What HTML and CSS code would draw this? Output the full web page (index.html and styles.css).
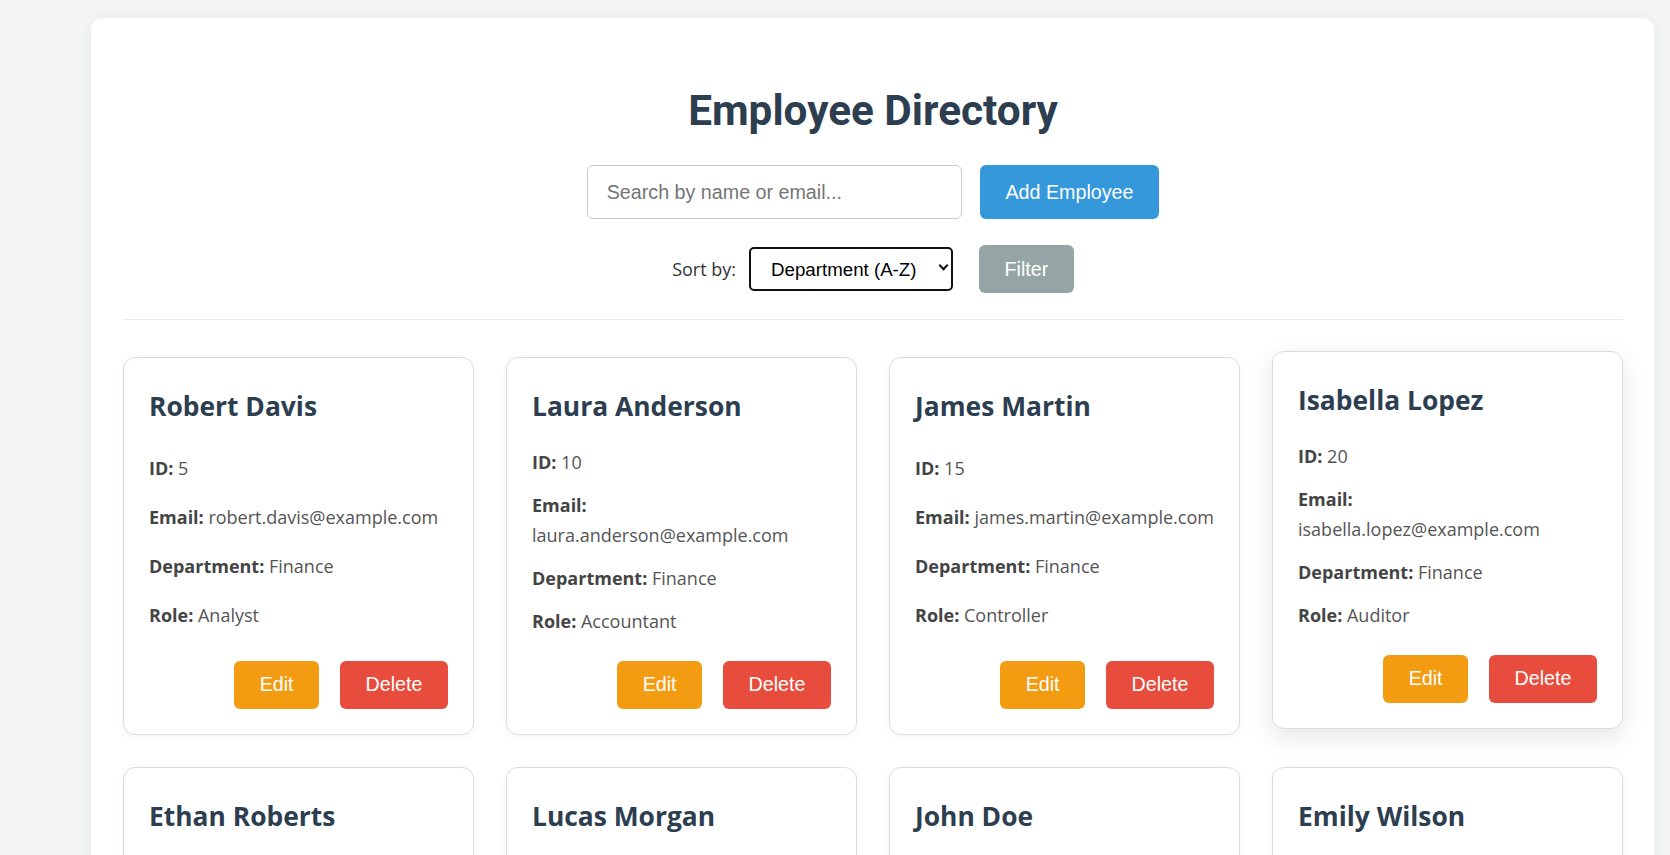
FILE: index.html
```html
<!DOCTYPE html>
<html lang="en">
<head>
<meta charset="utf-8">
<title>Employee Directory</title>
<link rel="stylesheet" href="styles.css">
</head>
<body>
<main class="container">
  <header class="header">
    <h1 class="page-title">Employee Directory</h1>
    <div class="search-row">
      <input class="search-input" type="text" placeholder="Search by name or email...">
      <button class="btn btn-primary" type="button">Add Employee</button>
    </div>
    <div class="sort-row">
      <label class="sort-label" for="sort">Sort by:</label>
      <span class="select-wrap">
        <select class="sort-select" id="sort">
          <option>Department (A-Z)</option>
          <option>Name (A-Z)</option>
          <option>ID</option>
        </select>
      </span>
      <button class="btn btn-muted" type="button">Filter</button>
    </div>
  </header>

  <section class="card-grid">
    <article class="card">
      <h3 class="card-name">Robert Davis</h3>
      <p class="card-line"><strong>ID:</strong> 5</p>
      <p class="card-line"><strong>Email:</strong> robert.davis@example.com</p>
      <p class="card-line"><strong>Department:</strong> Finance</p>
      <p class="card-line"><strong>Role:</strong> Analyst</p>
      <div class="card-actions">
        <button class="btn btn-edit" type="button">Edit</button>
        <button class="btn btn-delete" type="button">Delete</button>
      </div>
    </article>
    <article class="card">
      <h3 class="card-name">Laura Anderson</h3>
      <p class="card-line"><strong>ID:</strong> 10</p>
      <p class="card-line"><strong>Email:</strong> laura.anderson@example.com</p>
      <p class="card-line"><strong>Department:</strong> Finance</p>
      <p class="card-line"><strong>Role:</strong> Accountant</p>
      <div class="card-actions">
        <button class="btn btn-edit" type="button">Edit</button>
        <button class="btn btn-delete" type="button">Delete</button>
      </div>
    </article>
    <article class="card">
      <h3 class="card-name">James Martin</h3>
      <p class="card-line"><strong>ID:</strong> 15</p>
      <p class="card-line"><strong>Email:</strong> james.martin@example.com</p>
      <p class="card-line"><strong>Department:</strong> Finance</p>
      <p class="card-line"><strong>Role:</strong> Controller</p>
      <div class="card-actions">
        <button class="btn btn-edit" type="button">Edit</button>
        <button class="btn btn-delete" type="button">Delete</button>
      </div>
    </article>
    <article class="card card-hover">
      <h3 class="card-name">Isabella Lopez</h3>
      <p class="card-line"><strong>ID:</strong> 20</p>
      <p class="card-line"><strong>Email:</strong> isabella.lopez@example.com</p>
      <p class="card-line"><strong>Department:</strong> Finance</p>
      <p class="card-line"><strong>Role:</strong> Auditor</p>
      <div class="card-actions">
        <button class="btn btn-edit" type="button">Edit</button>
        <button class="btn btn-delete" type="button">Delete</button>
      </div>
    </article>

    <article class="card">
      <h3 class="card-name">Ethan Roberts</h3>
      <p class="card-line"><strong>ID:</strong> 25</p>
      <p class="card-line"><strong>Email:</strong> ethan.roberts@example.com</p>
      <p class="card-line"><strong>Department:</strong> Finance</p>
      <p class="card-line"><strong>Role:</strong> Analyst</p>
      <div class="card-actions">
        <button class="btn btn-edit" type="button">Edit</button>
        <button class="btn btn-delete" type="button">Delete</button>
      </div>
    </article>
    <article class="card">
      <h3 class="card-name">Lucas Morgan</h3>
      <p class="card-line"><strong>ID:</strong> 30</p>
      <p class="card-line"><strong>Email:</strong> lucas.morgan@example.com</p>
      <p class="card-line"><strong>Department:</strong> Finance</p>
      <p class="card-line"><strong>Role:</strong> Treasurer</p>
      <div class="card-actions">
        <button class="btn btn-edit" type="button">Edit</button>
        <button class="btn btn-delete" type="button">Delete</button>
      </div>
    </article>
    <article class="card">
      <h3 class="card-name">John Doe</h3>
      <p class="card-line"><strong>ID:</strong> 1</p>
      <p class="card-line"><strong>Email:</strong> john.doe@example.com</p>
      <p class="card-line"><strong>Department:</strong> HR</p>
      <p class="card-line"><strong>Role:</strong> Manager</p>
      <div class="card-actions">
        <button class="btn btn-edit" type="button">Edit</button>
        <button class="btn btn-delete" type="button">Delete</button>
      </div>
    </article>
    <article class="card">
      <h3 class="card-name">Emily Wilson</h3>
      <p class="card-line"><strong>ID:</strong> 6</p>
      <p class="card-line"><strong>Email:</strong> emily.wilson@example.com</p>
      <p class="card-line"><strong>Department:</strong> HR</p>
      <p class="card-line"><strong>Role:</strong> Recruiter</p>
      <div class="card-actions">
        <button class="btn btn-edit" type="button">Edit</button>
        <button class="btn btn-delete" type="button">Delete</button>
      </div>
    </article>
  </section>
</main>
</body>
</html>
```
FILE: styles.css
```css
html {
  overflow: hidden;
}

body {
  margin: 0;
  background: #f4f6f6;
  font-family: "Open Sans", "Noto Sans", sans-serif;
  font-size: 18px;
  color: #333;
}

.container {
  margin: 18px 16px 0 91px;
  padding: 32px 31px 32px 32px;
  background: #fff;
  border-radius: 12px;
  box-shadow: 0 0 20px rgba(0, 0, 0, 0.06);
}

/* Header */
.header {
  display: flex;
  flex-direction: column;
  align-items: center;
  padding-bottom: 26px;
  border-bottom: 1px solid #ececec;
  margin-bottom: 37px;
}

.page-title {
  margin: 36px 0 29px;
  font-family: Roboto, "Open Sans", sans-serif;
  font-size: 42.3px;
  line-height: 50px;
  font-weight: 700;
  color: #2c3e50;
}

.search-row {
  display: flex;
  align-items: stretch;
  gap: 18px;
}

.search-input {
  box-sizing: border-box;
  width: 375px;
  height: 54px;
  padding: 0 18.75px;
  border: 1px solid #ccc;
  border-radius: 6px;
  font-family: "Liberation Sans", Arial, sans-serif;
  font-size: 19.7px;
  color: #333;
  outline: none;
}

.search-input::placeholder {
  color: #757575;
}

.sort-row {
  display: flex;
  align-items: center;
  margin-top: 26px;
}

.sort-label {
  font-size: 18px;
  color: #333;
  margin-right: 13px;
}

.select-wrap {
  position: relative;
  display: inline-flex;
  margin-right: 26px;
}

.select-wrap::after {
  content: "";
  position: absolute;
  right: 6.5px;
  top: 15px;
  width: 5px;
  height: 5px;
  border-right: 2px solid #111;
  border-bottom: 2px solid #111;
  transform: rotate(45deg);
  pointer-events: none;
}

.sort-select {
  appearance: none;
  -webkit-appearance: none;
  box-sizing: border-box;
  width: 204px;
  height: 44px;
  padding: 0 28px 0 20px;
  border: 2px solid #111;
  border-radius: 5px;
  background: #fff;
  font-family: "Liberation Sans", Arial, sans-serif;
  font-size: 18.7px;
  color: #000;
}

/* Buttons */
.btn {
  border: none;
  border-radius: 6px;
  padding: 12.5px 25.5px;
  font-family: "Liberation Sans", Arial, sans-serif;
  font-size: 19.7px;
  line-height: normal;
  color: #fff;
  cursor: pointer;
}

.btn-primary {
  background: #3498db;
}

.btn-muted {
  background: #95a5a6;
}

.btn-edit {
  background: #f39c12;
}

.btn-delete {
  background: #e74c3c;
}

/* Cards */
.card-grid {
  display: grid;
  grid-template-columns: repeat(auto-fill, minmax(300px, 1fr));
  gap: 32px;
}

.card {
  display: flex;
  flex-direction: column;
  justify-content: space-between;
  padding: 25px;
  border: 1px solid #dcdcdc;
  border-radius: 12px;
  background: #fff;
  box-shadow: 0 2px 8px rgba(0, 0, 0, 0.04);
}

.card-hover {
  transform: translateY(-6px);
  box-shadow: 0 8px 24px rgba(0, 0, 0, 0.1);
}

.card-name {
  margin: 7px 0 25px;
  font-size: 26.4px;
  line-height: 32px;
  font-weight: 700;
  color: #2c3e50;
}

.card-line {
  margin: 0 0 13px;
  font-size: 18px;
  line-height: 30px;
  color: #555;
}

.card-line strong {
  color: #444;
}

.card-actions {
  display: flex;
  justify-content: flex-end;
  gap: 21px;
  margin-top: 11.5px;
}
```
